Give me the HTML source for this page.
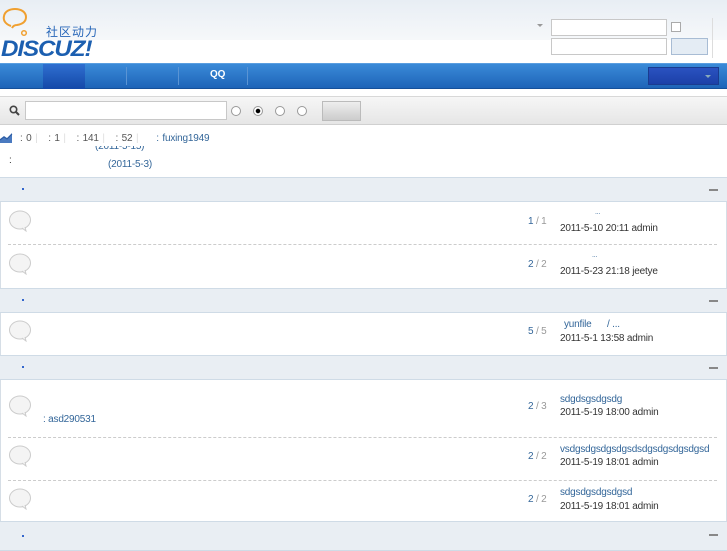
<!DOCTYPE html>
<html><head><meta charset="utf-8"><style>
*{margin:0;padding:0;box-sizing:border-box}
body{width:727px;height:545px;overflow:hidden;background:#fff;font-family:"Liberation Sans","Noto Sans CJK SC",sans-serif;font-size:10px;color:#333;position:relative;letter-spacing:-0.2px}
.a{position:absolute}
.hdr{left:0;top:0;width:727px;height:40px;background:linear-gradient(#e8eef4,#f6f8fa)}
.nav{left:0;top:63px;width:727px;height:26px;background:linear-gradient(#3a8ad8,#1e64b8);border-top:1px solid #5a9ee0;border-bottom:1px solid #16509a}
.sep{top:67px;width:1px;height:18px;background:#5a94d4}
.sb{left:0;top:96px;width:727px;height:29px;background:linear-gradient(#f6f6f6,#e6e6e6);border-top:1px solid #d8d8d8;border-bottom:1px solid #d0d0d0}
.inp{background:#fff;border:1px solid #c8c8c8}
.rad{width:10px;height:10px;border-radius:50%;border:1px solid #999;background:#fff}
.sh{left:0;width:727px;height:25px;background:#e9eef3;border-top:1px solid #cfdbe6;border-bottom:1px solid #cfdbe6}
.sh .d{position:absolute;left:22px;top:10px;width:2px;height:2px;background:#36c}
.sh .m{position:absolute;right:9px;top:11px;width:9px;height:2px;background:#888}
.ic{left:8px;width:24px;height:22px}
.dash{left:8px;width:709px;border-top:1px dashed #ccc}
.n{color:#369;left:528px}
.n span{color:#999}
.l1{left:560px;color:#369}
.l2{left:560px;color:#333}
.edge{left:0;width:1px;background:#d6dee6}
.edge2{right:0;width:1px;background:#d6dee6}
</style></head><body>
<div class="a hdr"></div>
<svg class="a" style="left:2px;top:7px" width="30" height="30" viewBox="0 0 30 30"><path d="M9 19C3 17 1 13 2 9c1-5 6-7 11-7 6 0 11 3 11 8 0 4-3 7-9 8-2 0-4 1-5 3" fill="none" stroke="#f0a030" stroke-width="2"/><circle cx="22" cy="26" r="2.3" fill="none" stroke="#f0a030" stroke-width="1.5"/></svg>
<div class="a" style="left:46px;top:23px;font-size:12px;color:#2766b8;letter-spacing:1px">社区动力</div>
<div class="a" style="left:1px;top:38px;font-size:22px;font-weight:bold;font-style:italic;color:#1c5fb0;letter-spacing:-1px;line-height:22px;transform:scaleX(1.1);transform-origin:left">DISCUZ!</div>
<div class="a" style="left:537px;top:24px;width:0;height:0;border-left:3px solid transparent;border-right:3px solid transparent;border-top:3px solid #999"></div>
<div class="a inp" style="left:551px;top:19px;width:116px;height:17px"></div>
<div class="a" style="left:671px;top:22px;width:10px;height:10px;border:1px solid #aaa;background:#fff"></div>
<div class="a inp" style="left:551px;top:38px;width:116px;height:17px"></div>
<div class="a" style="left:671px;top:38px;width:37px;height:17px;background:#e4ecf4;border:1px solid #a8bcd4"></div>
<div class="a" style="left:712px;top:18px;width:1px;height:40px;background:#ddd"></div>
<div class="a nav"></div>
<div class="a" style="left:43px;top:64px;width:42px;height:25px;background:linear-gradient(#2f6fd0,#1448a8)"></div>
<div class="a sep" style="left:126px"></div><div class="a sep" style="left:178px"></div><div class="a sep" style="left:247px"></div>
<div class="a" style="left:210px;top:69px;color:#fff;font-weight:bold;font-size:10px">QQ</div>
<div class="a" style="left:648px;top:67px;width:71px;height:18px;background:linear-gradient(#2a52c0,#1c40a8);border:1px solid #1a3c90"></div>
<div class="a" style="left:705px;top:75px;border-left:3px solid transparent;border-right:3px solid transparent;border-top:3px solid #8ab"></div>
<div class="a sb"></div>
<svg class="a" style="left:9px;top:105px" width="11" height="11"><circle cx="4.5" cy="4.5" r="3.2" fill="none" stroke="#444" stroke-width="1.6"/><path d="M7 7l3 3" stroke="#444" stroke-width="2"/></svg>
<div class="a inp" style="left:25px;top:101px;width:202px;height:19px"></div>
<div class="a rad" style="left:231px;top:106px"></div>
<div class="a rad" style="left:253px;top:106px;background:radial-gradient(#000 35%,#fff 45%)"></div>
<div class="a rad" style="left:275px;top:106px"></div>
<div class="a rad" style="left:297px;top:106px"></div>
<div class="a" style="left:322px;top:101px;width:39px;height:20px;background:linear-gradient(#eee,#ccc);border:1px solid #bbb"></div>
<svg class="a" style="left:0;top:132px" width="13" height="12"><path d="M0 7l4-3 3 2 5-5v10H0z" fill="#4a7ac0"/><path d="M0 8l4-3 3 2 5-5" fill="none" stroke="#2a5aa0"/></svg>
<div class="a" style="left:20px;top:133px;color:#555;word-spacing:1px">: 0 <span style="color:#ddd">|</span> &nbsp; : 1 <span style="color:#ddd">|</span> &nbsp; : 141 <span style="color:#ddd">|</span> &nbsp; : 52 <span style="color:#ddd">|</span> &nbsp;&nbsp;&nbsp; <span style="color:#369">: fuxing1949</span></div>
<div class="a" style="left:95px;top:146px;color:#369;height:5px;overflow:hidden;line-height:2px">(2011-5-15)</div>
<div class="a" style="left:9px;top:155px;color:#333">:</div>
<div class="a" style="left:108px;top:159px;color:#369">(2011-5-3)</div>

<div class="a edge" style="top:177px;height:368px"></div><div class="a edge2" style="top:177px;height:368px"></div>
<div class="a sh" style="top:177px"><i class="d"></i><i class="m"></i></div>
<svg class="a ic" style="top:210px" viewBox="0 0 24 22"><ellipse cx="12" cy="10" rx="10.5" ry="9" fill="#f4f4f4" stroke="#ccc"/><path d="M14 18l4 3-1-4" fill="#f4f4f4" stroke="#ccc"/></svg>
<div class="a n" style="top:216px">1 <span>/ 1</span></div>
<div class="a l1" style="top:209px;left:595px;font-size:7px">...</div>
<div class="a l2" style="top:223px">2011-5-10 20:11 admin</div>
<div class="a dash" style="top:244px"></div>
<svg class="a ic" style="top:253px" viewBox="0 0 24 22"><ellipse cx="12" cy="10" rx="10.5" ry="9" fill="#f4f4f4" stroke="#ccc"/><path d="M14 18l4 3-1-4" fill="#f4f4f4" stroke="#ccc"/></svg>
<div class="a n" style="top:259px">2 <span>/ 2</span></div>
<div class="a l1" style="top:252px;left:592px;font-size:7px">...</div>
<div class="a l2" style="top:266px">2011-5-23 21:18 jeetye</div>

<div class="a sh" style="top:288px"><i class="d"></i><i class="m"></i></div>
<svg class="a ic" style="top:320px" viewBox="0 0 24 22"><ellipse cx="12" cy="10" rx="10.5" ry="9" fill="#f4f4f4" stroke="#ccc"/><path d="M14 18l4 3-1-4" fill="#f4f4f4" stroke="#ccc"/></svg>
<div class="a n" style="top:326px">5 <span>/ 5</span></div>
<div class="a l1" style="top:319px;left:564px">yunfile &nbsp;&nbsp;&nbsp;&nbsp; / ...</div>
<div class="a l2" style="top:333px">2011-5-1 13:58 admin</div>

<div class="a sh" style="top:355px"><i class="d"></i><i class="m"></i></div>
<svg class="a ic" style="top:395px" viewBox="0 0 24 22"><ellipse cx="12" cy="10" rx="10.5" ry="9" fill="#f4f4f4" stroke="#ccc"/><path d="M14 18l4 3-1-4" fill="#f4f4f4" stroke="#ccc"/></svg>
<div class="a" style="left:43px;top:414px;color:#369">: asd290531</div>
<div class="a n" style="top:401px">2 <span>/ 3</span></div>
<div class="a l1" style="top:394px">sdgdsgsdgsdg</div>
<div class="a l2" style="top:407px">2011-5-19 18:00 admin</div>
<div class="a dash" style="top:437px"></div>
<svg class="a ic" style="top:445px" viewBox="0 0 24 22"><ellipse cx="12" cy="10" rx="10.5" ry="9" fill="#f4f4f4" stroke="#ccc"/><path d="M14 18l4 3-1-4" fill="#f4f4f4" stroke="#ccc"/></svg>
<div class="a n" style="top:451px">2 <span>/ 2</span></div>
<div class="a l1" style="top:444px">vsdgsdgsdgsdgsdsdgsdgsdgsdgsd</div>
<div class="a l2" style="top:457px">2011-5-19 18:01 admin</div>
<div class="a dash" style="top:480px"></div>
<svg class="a ic" style="top:488px" viewBox="0 0 24 22"><ellipse cx="12" cy="10" rx="10.5" ry="9" fill="#f4f4f4" stroke="#ccc"/><path d="M14 18l4 3-1-4" fill="#f4f4f4" stroke="#ccc"/></svg>
<div class="a n" style="top:494px">2 <span>/ 2</span></div>
<div class="a l1" style="top:487px">sdgsdgsdgsdgsd</div>
<div class="a l2" style="top:501px">2011-5-19 18:01 admin</div>

<div class="a sh" style="top:521px;height:30px"><i class="d" style="top:13px"></i><i class="m" style="top:12px"></i></div>
</body></html>
